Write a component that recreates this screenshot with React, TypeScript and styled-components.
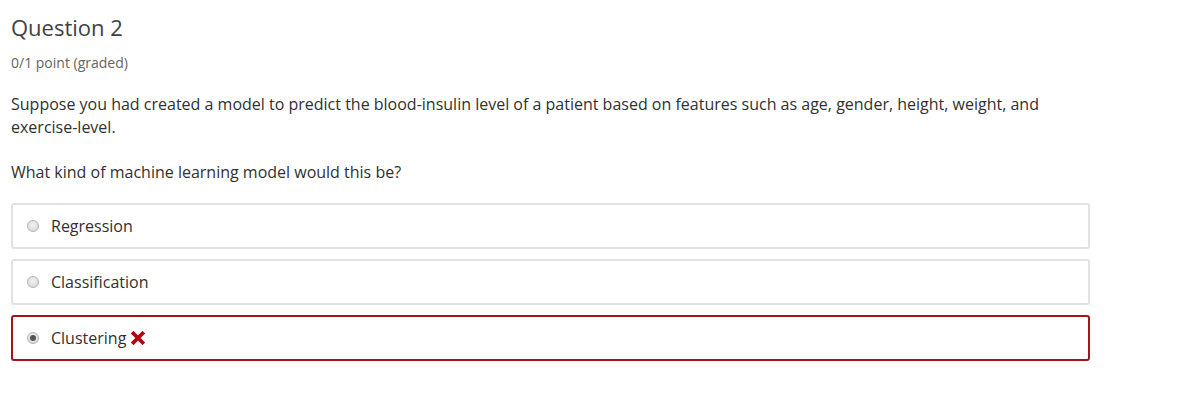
import React from "react";
import styled, { createGlobalStyle } from "styled-components";

const Global = createGlobalStyle`
  html, body { margin: 0; padding: 0; background: #fff; }
  body { font-family: "Open Sans", "Noto Sans", sans-serif; color: #313131; }
`;

const Page = styled.div`
  padding: 12px 0 0 11px;
  width: 1080px;
`;

const Title = styled.h3`
  margin: 0;
  font-size: 22px;
  font-weight: 400;
  line-height: 30px;
  color: #414141;
`;

const Points = styled.div`
  margin-top: 12px;
  font-size: 14px;
  line-height: 18px;
  color: #646464;
`;

const Para = styled.p<{ $mt: number }>`
  margin: 0;
  margin-top: ${(p) => p.$mt}px;
  font-size: 16px;
  line-height: 23px;
  color: #313131;
`;

const Options = styled.div`
  margin-top: 19px;
  display: flex;
  flex-direction: column;
  gap: 10px;
  width: 1079px;
`;

const Option = styled.label<{ $wrong?: boolean }>`
  display: flex;
  align-items: center;
  box-sizing: border-box;
  height: 46px;
  padding-left: 14px;
  border: 2px solid ${(p) => (p.$wrong ? "#a1151d" : "#e2e2e2")};
  border-radius: 3px;
  font-size: 16px;
  color: #313131;
`;

const Radio = styled.span<{ $checked?: boolean }>`
  width: 12px;
  height: 12px;
  box-sizing: border-box;
  border-radius: 50%;
  border: 1px solid #b4b4b4;
  background: radial-gradient(circle at 50% 40%, #f2f2f2, #d4d4d4);
  margin-right: 12px;
  display: flex;
  align-items: center;
  justify-content: center;
  &::after {
    content: "";
    display: ${(p) => (p.$checked ? "block" : "none")};
    width: 6px;
    height: 6px;
    border-radius: 50%;
    background: #555;
  }
`;

const Label = styled.span`
  line-height: 22px;
`;

const Cross = styled.svg`
  margin-left: 5px;
  width: 14px;
  height: 14px;
`;

const options = [
  { label: "Regression" },
  { label: "Classification" },
  { label: "Clustering", checked: true, wrong: true },
];

export default function App() {
  return (
    <>
      <Global />
      <Page>
        <Title>Question 2</Title>
        <Points>0/1 point (graded)</Points>
        <Para $mt={21}>
          Suppose you had created a model to predict the blood-insulin level of a patient based on features such as age,
          gender, height, weight, and exercise-level.
        </Para>
        <Para $mt={22}>What kind of machine learning model would this be?</Para>
        <Options>
          {options.map((o) => (
            <Option key={o.label} $wrong={o.wrong}>
              <Radio $checked={o.checked} />
              <Label>{o.label}</Label>
              {o.wrong && (
                <Cross viewBox="0 0 14 14">
                  <path d="M2.5 2.5 L11.5 11.5 M11.5 2.5 L2.5 11.5" stroke="#b20610" strokeWidth="3.8" strokeLinecap="square" />
                </Cross>
              )}
            </Option>
          ))}
        </Options>
      </Page>
    </>
  );
}
